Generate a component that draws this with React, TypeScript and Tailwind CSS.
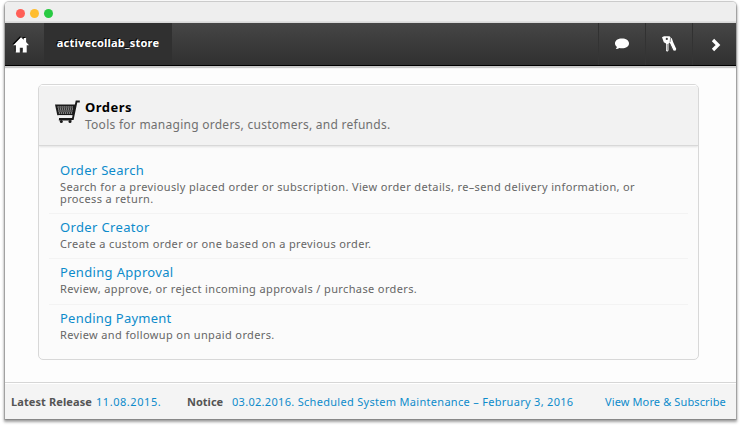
import React from "react";

type Item = { title: string; titleClass: string; lines: string[]; rowClass: string };

const items: Item[] = [
  {
    title: "Order Search",
    titleClass: "tracking-[0.3px]",
    lines: [
      "Search for a previously placed order or subscription. View order details, re–send delivery information, or",
      "process a return.",
    ],
    rowClass: "h-[57px] border-b",
  },
  {
    title: "Order Creator",
    titleClass: "tracking-[0.35px]",
    lines: ["Create a custom order or one based on a previous order."],
    rowClass: "h-[45px] border-b",
  },
  {
    title: "Pending Approval",
    titleClass: "tracking-[0.33px]",
    lines: ["Review, approve, or reject incoming approvals / purchase orders."],
    rowClass: "h-[46px] border-b",
  },
  {
    title: "Pending Payment",
    titleClass: "tracking-[0.23px]",
    lines: ["Review and followup on unpaid orders."],
    rowClass: "h-[45px]",
  },
];

function HomeIcon() {
  return (
    <svg width="18" height="18" viewBox="0 0 18 18" className="drop-shadow-[-1px_-1px_0_#000]">
      <path
        d="M9 1.2 11.7 3.8V2h2.4v4.1L17 9.3h-2.3V16.500h-4v-4.700H7.8v4.700h-4V9.3H1.3Z"
        fill="#fff"
      />
    </svg>
  );
}

function ChatIcon() {
  return (
    <svg width="16" height="14" viewBox="0 0 16 14">
      <path
        d="M8 1.5c4 0 7 2 7 4.9s-3 4.9-7 4.9c-1 0-1.900-.1-2.700-.4-.9.8-2 1.200-3.500 1.100.8-.8 1.100-1.500 1.100-2.200C1.700 8.900 1 7.700 1 6.400 1 3.500 4 1.500 8 1.500Z"
        fill="#fff"
      />
    </svg>
  );
}

function KeysIcon() {
  return (
    <svg width="16" height="18" viewBox="0 0 16 18">
      <path d="m8.500 2.500 2.300.8 1.500 4.200 3 6.500-.9 1.800-1.900-.4-3.600-7.400Z" fill="#fff" />
      <path d="M1 2.200 3 1.300h5.500l1 .900-.4 5-1.600 1.600v6.700L6.200 16.800l-1.200-1V8.600L2.800 7.200Z" fill="#fff" />
      <path d="M6.200 9v6.500M8.400 8.200l2.800 6.500" stroke="#555" strokeWidth=".7" fill="none" />
      <path d="M9.600 2.800 9.100 7" stroke="#444" strokeWidth=".6" fill="none" />
      <circle cx="5.800" cy="3.900" r="1.100" fill="#3d3d3d" />
    </svg>
  );
}

function CartIcon() {
  return (
    <svg width="27" height="26" viewBox="0 0 27 26" fill="none" className="translate-y-[0.5px]">
      <path d="M1 5h21l-2.300 10.800H3.300Z" fill="#1a1a1a" />
      <path
        d="M3.500 7.500h16M4 9.500h15M4.300 11.500h14.500M4.800 13.500h13.500"
        stroke="#f2f2f2"
        strokeWidth=".9"
        strokeDasharray="1.300 .7"
      />
      <path d="M25.800 2h-3.300l-3.700 17.500H5" stroke="#1a1a1a" strokeWidth="1.900" />
      <rect x="4.500" y="15.800" width="13.300" height="2.700" fill="#f2f2f2" />
      <path d="M4.800 20.500h13" stroke="#1a1a1a" strokeWidth="1.200" />
      <circle cx="7.300" cy="22" r="1.500" fill="#1a1a1a" />
      <circle cx="16" cy="22" r="1.500" fill="#1a1a1a" />
    </svg>
  );
}

function NavButton({ children, className }: { children: React.ReactNode; className: string }) {
  return (
    <div className={`flex h-full shrink-0 ${className}`}>
      <div className="h-full w-px bg-gradient-to-b from-[#303030] to-[#363636]" />
      <div className="flex flex-1 items-center justify-center">{children}</div>
    </div>
  );
}

export default function App() {
  return (
    <div className="h-[425px] w-[741px] overflow-hidden bg-white pt-[2px] pl-[5px] font-['Noto_Sans','Lucida_Grande',sans-serif]">
      <div className="flex h-[417px] w-[731px] flex-col overflow-hidden rounded-t-[4px] bg-[#fdfdfd] shadow-[0_0_1px_1px_rgba(0,0,0,0.18),0_2px_3px_1px_rgba(0,0,0,0.38)]">
        <div className="flex h-[21px] shrink-0 items-center gap-[5px] border-b-2 border-[#e0e0e0] bg-[#eeeeee] pl-[11px] pt-[3px]">
          <span className="size-[9px] rounded-full bg-[#ff5f57]" />
          <span className="size-[9px] rounded-full bg-[#ffbd2e]" />
          <span className="size-[9px] rounded-full bg-[#28ca42]" />
        </div>

        <div className="flex h-[43px] shrink-0 border-b border-black bg-gradient-to-b from-[#464646] to-[#303030] shadow-[0_1px_1px_1px_rgba(0,0,0,0.2)]">
          <div className="flex w-[39px] items-center pl-[7px] pt-px">
            <HomeIcon />
          </div>
          <div className="flex w-[128px] items-center justify-center bg-[#303030] pb-[2px] text-[11px] font-bold text-white [text-shadow:-1px_-1px_0_#000]">
            <span className="whitespace-nowrap tracking-[0.2px]">activecollab_store</span>
          </div>
          <div className="flex-1" />
          <NavButton className="w-[47px]">
            <ChatIcon />
          </NavButton>
          <NavButton className="w-[47px]">
            <KeysIcon />
          </NavButton>
          <NavButton className="w-[44px] pr-[6px]">
            <svg width="12" height="14" viewBox="0 0 12 14" className="ml-[9px] mt-px">
              <path d="m3 2 5 5-5 5" stroke="#fff" strokeWidth="3.300" fill="none" />
            </svg>
          </NavButton>
        </div>

        <div className="flex-1 pt-[18px] pl-[33px]">
          <div className="h-[276px] w-[661px] overflow-hidden rounded-[5px] border border-[#d8d8d8] bg-[#fbfbfb]">
            <div className="flex h-[61px] border-b border-[#d8d8d8] bg-[#f2f2f2] pt-[14px] pl-[15px] shadow-[inset_0_1px_0_#fff,0_1px_2px_rgba(0,0,0,0.1)]">
              <CartIcon />
              <div className="ml-[4px] whitespace-nowrap">
                <div className="text-[13px] leading-[17px] font-bold tracking-[0.5px] text-black">Orders</div>
                <div className="text-[12px] leading-[18px] tracking-[0.26px] text-[#707070]">
                  Tools for managing orders, customers, and refunds.
                </div>
              </div>
            </div>
            <div className="mx-[10px] pt-[11px]">
              {items.map((it) => (
                <div key={it.title} className={`border-[#f3f3f3] pl-[11px] pt-[4px] whitespace-nowrap ${it.rowClass}`}>
                  <div className={`mb-[2px] text-[13px] leading-[18px] text-[#0d8bcb] ${it.titleClass}`}>{it.title}</div>
                  {it.lines.map((l) => (
                    <div key={l} className="text-[11px] leading-[12px] tracking-[0.37px] text-[#666]">
                      {l}
                    </div>
                  ))}
                </div>
              ))}
            </div>
          </div>
        </div>

        <div className="flex h-[37px] shrink-0 items-center border-t border-[#d6d6d6] bg-[#f4f4f4] pl-[6px] pt-[2px] text-[11px] whitespace-nowrap text-[#0d8bcb] shadow-[inset_0_1px_0_#fff]">
          <div className="w-[85px] font-bold tracking-[0.1px] text-[#555]">Latest Release</div>
          <div className="w-[91px] tracking-[0.55px]">11.08.2015.</div>
          <div className="w-[45px] font-bold text-[#555]">Notice</div>
          <div className="w-[373px] tracking-[0.3px]">03.02.2016. Scheduled System Maintenance – February 3, 2016</div>
          <div className="tracking-[0.12px]">View More &amp; Subscribe</div>
        </div>
      </div>
    </div>
  );
}
